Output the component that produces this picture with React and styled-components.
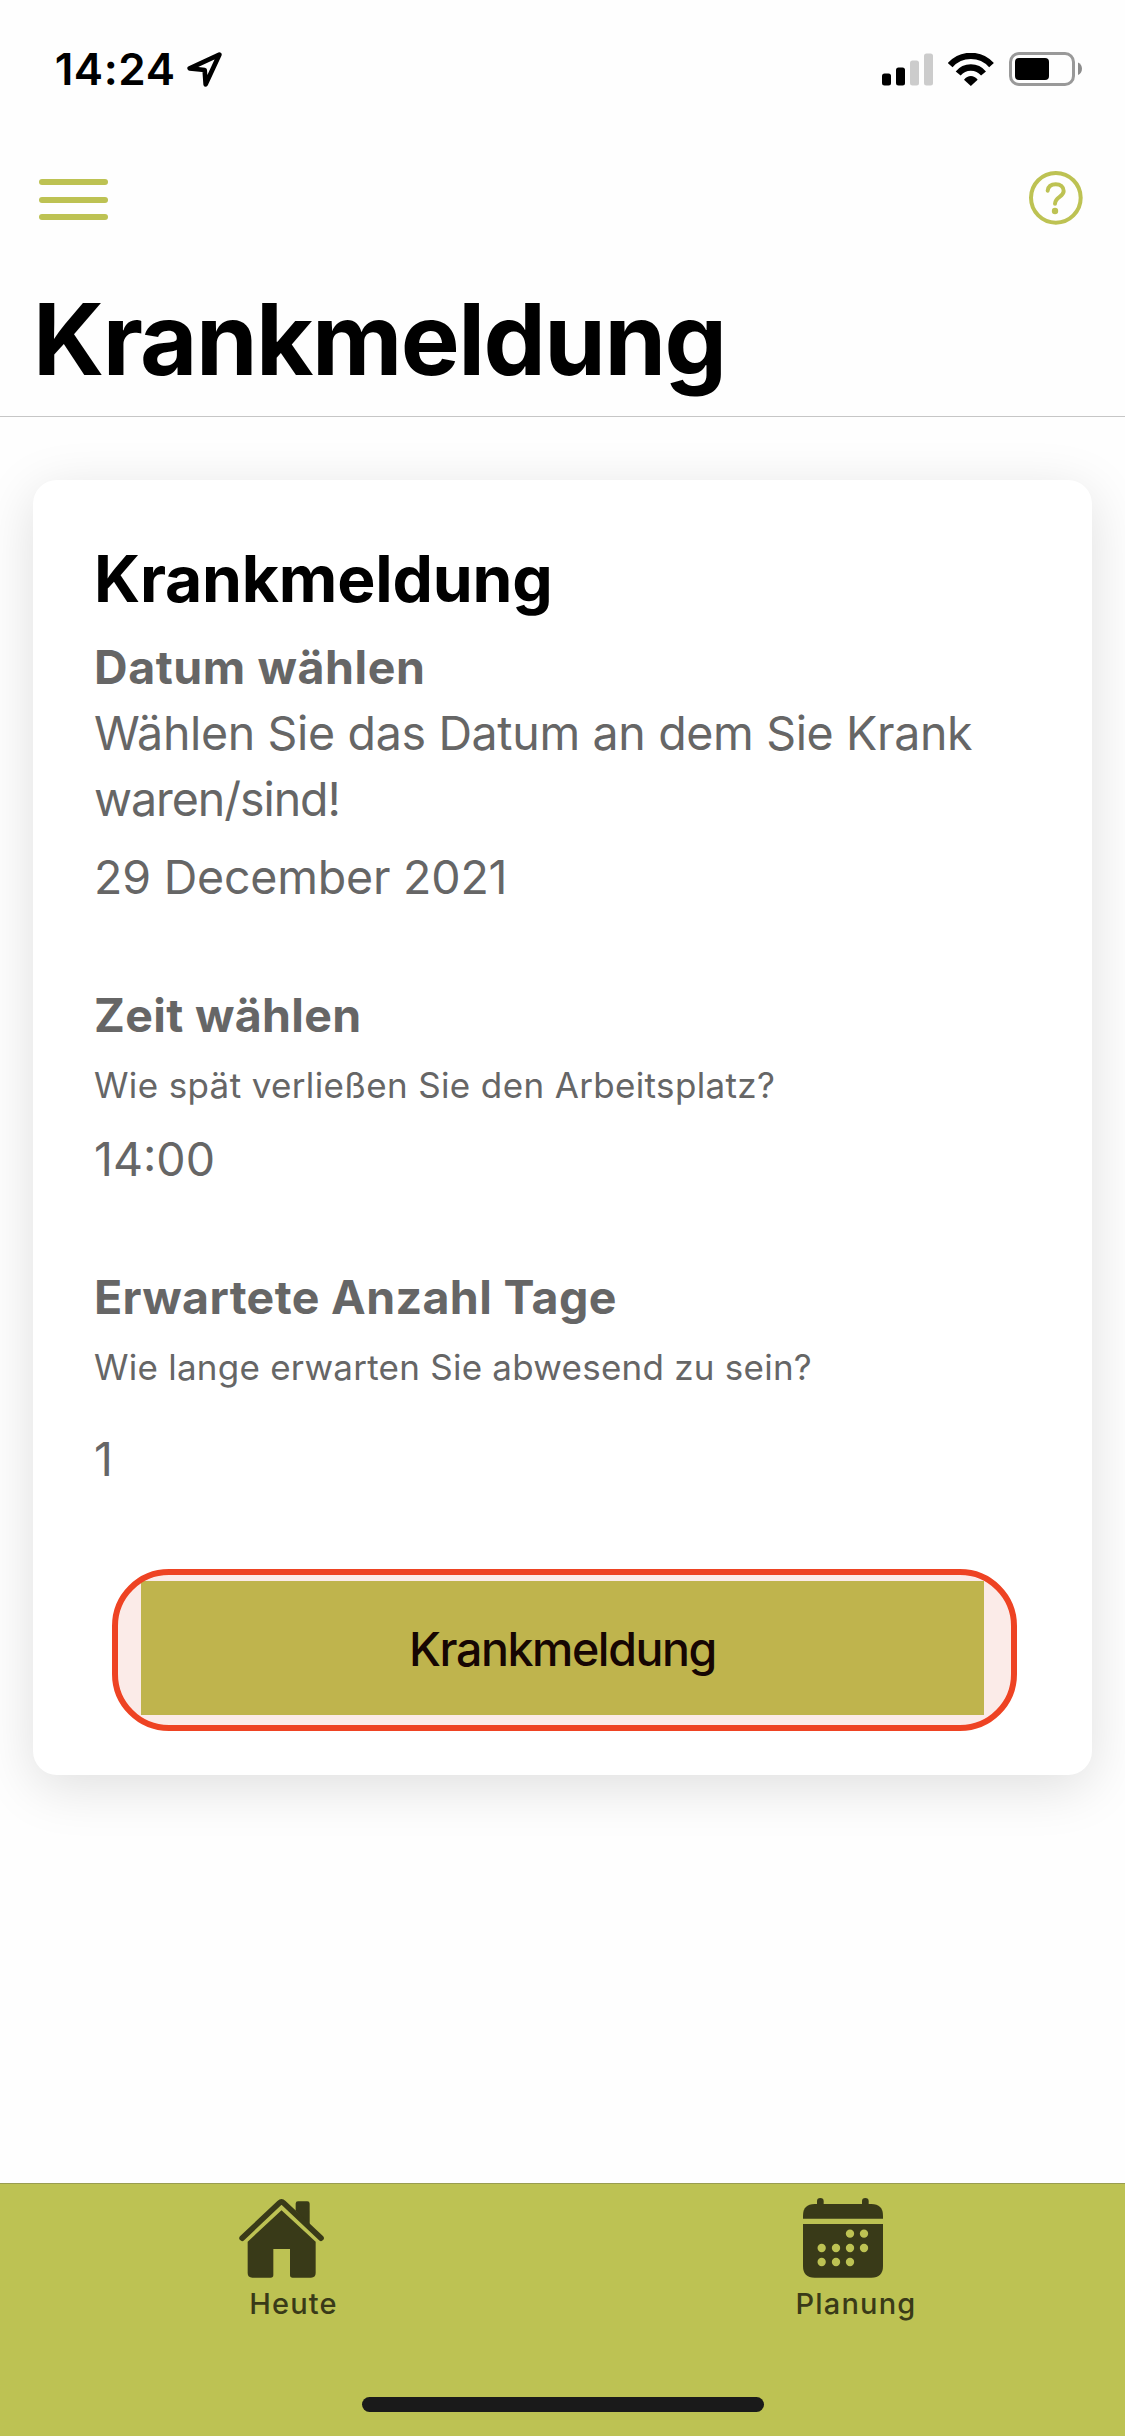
import React from "react";
import styled, { createGlobalStyle } from "styled-components";

const olive = "#bdc253";
const dark = "#393a18";
const grey = "#666666";

const GlobalStyle = createGlobalStyle`
  * { box-sizing: border-box; }
  body { margin: 0; background: #fefefe; }
`;

const Screen = styled.div`
  display: flex;
  flex-direction: column;
  width: 1125px;
  height: 2436px;
  overflow: hidden;
  background: #fefefe;
  font-family: Inter, "Liberation Sans", sans-serif;
  color: #000;
`;

const StatusBar = styled.div`
  display: flex;
  align-items: center;
  justify-content: space-between;
  height: 138px;
  padding: 0 43px 0 54.7px;
`;

const StatusGroup = styled.div`
  display: flex;
  align-items: center;
  gap: ${(p) => p.$gap}px;
`;

const Clock = styled.span`
  font-size: 44px;
  font-weight: 600;
  line-height: 52px;
  letter-spacing: 0.58px;
`;

const Icon = styled.svg`
  display: block;
  flex: none;
  width: ${(p) => p.$w}px;
  height: ${(p) => p.$h}px;
`;

const Toolbar = styled.nav`
  display: flex;
  align-items: center;
  justify-content: space-between;
  height: 120px;
  padding: 0 42.3px 0 38.7px;
`;

const IconButton = styled.button`
  padding: 0;
  border: 0;
  background: none;
`;

const MenuLines = styled.span`
  display: flex;
  flex-direction: column;
  gap: 11.6px;
  padding-top: 3px;
`;

const MenuLine = styled.span`
  width: 69.8px;
  height: 6px;
  border-radius: 3px;
  background: ${olive};
`;

const PageHeader = styled.header`
  padding: 21px 33px 17px;
  border-bottom: 1px solid #c6c6c6;
`;

const PageTitle = styled.h1`
  margin: 0;
  font-size: 99px;
  font-weight: 700;
  line-height: 120px;
  letter-spacing: -1.55px;
`;

const Main = styled.main`
  padding: 63px 33px 0;
`;

const Card = styled.section`
  display: flex;
  flex-direction: column;
  height: 1295px;
  padding: 60px 61px 44px;
  border-radius: 24px;
  background: #fff;
  box-shadow: 0 12px 54px rgba(0, 0, 0, 0.125);
`;

const CardTitle = styled.h2`
  margin: 0 0 16px;
  font-size: 64.2px;
  font-weight: 700;
  line-height: 78px;
  letter-spacing: -0.21px;
`;

const Field = styled.div`
  display: flex;
  flex-direction: column;
  margin-bottom: ${(p) => p.$after}px;
  color: ${grey};
`;

const Label = styled.h3`
  margin: 0;
  font-size: 46.5px;
  font-weight: 700;
  line-height: 66px;
  letter-spacing: ${(p) => p.$track}px;
`;

const Description = styled.p`
  margin: 0;
  font-size: 46.5px;
  line-height: 66px;
`;

const Line = styled.span`
  display: block;
  letter-spacing: ${(p) => p.$track}px;
`;

const Hint = styled.p`
  margin: 13px 0 0;
  font-size: 35px;
  line-height: 48px;
  letter-spacing: ${(p) => p.$track}px;
`;

const Value = styled.div`
  margin-top: ${(p) => p.$before}px;
  font-size: 46.5px;
  line-height: 66px;
  letter-spacing: ${(p) => p.$track || 0}px;
`;

const Highlight = styled.div`
  position: relative;
  width: 904.5px;
  height: 162px;
  margin: auto 0 0 18px;
  padding: 12px 32.5px 16px 29px;

  &::after {
    content: "";
    position: absolute;
    inset: 0;
    border: 6px solid #ee4323;
    border-radius: 57px;
    background: rgba(215, 55, 25, 0.1);
    background-clip: padding-box;
    pointer-events: none;
  }
`;

const SubmitButton = styled.button`
  display: flex;
  align-items: center;
  justify-content: center;
  width: 843px;
  height: 134px;
  padding: 2px 0 0;
  border: 0;
  background: ${olive};
  font-family: inherit;
  font-size: 46.5px;
  font-weight: 500;
  letter-spacing: -1.41px;
  color: #000;
`;

const TabBar = styled.footer`
  display: flex;
  flex-direction: column;
  align-items: center;
  justify-content: space-between;
  height: 253px;
  margin-top: auto;
  padding-bottom: 24px;
  border-top: 1px solid #999d50;
  background: ${olive};
`;

const Tabs = styled.div`
  display: grid;
  grid-template-columns: 1fr 1fr;
  width: 100%;
`;

const Tab = styled.a`
  display: flex;
  flex-direction: column;
  align-items: center;
  gap: 8px;
  padding-top: 14px;
  color: ${dark};
`;

const TabLabel = styled.span`
  padding-left: 24.5px;
  font-size: 29px;
  font-weight: 500;
  line-height: 36px;
  letter-spacing: 1.2px;
`;

const HomeIndicator = styled.div`
  width: 402px;
  height: 15px;
  border-radius: 8px;
  background: #1a1a1a;
`;

const LocationIcon = () => (
  <Icon $w={35} $h={35} viewBox="0 0 105 105">
    <path d="M97 8 8 49 53 54 56 97Z" fill="none" stroke="#000" strokeWidth="14" strokeLinejoin="round" />
  </Icon>
);

const SignalIcon = () => (
  <Icon $w={51} $h={33} viewBox="0 0 51 33">
    <rect x="0" y="20.5" width="9" height="12" rx="2.5" />
    <rect x="14" y="14.5" width="9" height="18" rx="2.5" />
    <rect x="28" y="7.5" width="9" height="25" rx="2.5" fill="#ccc" />
    <rect x="42" y="0.5" width="9" height="32" rx="2.5" fill="#ccc" />
  </Icon>
);

const WifiIcon = () => (
  <Icon $w={45.7} $h={33} viewBox="0 0 137 99">
    <g fill="none" stroke="#000" strokeWidth="19">
      <path d="M6.5 36.5A83 83 0 0 1 130.5 36.5" />
      <path d="M30.5 61.5A49 49 0 0 1 106.5 61.5" />
    </g>
    <path d="M48 80Q57 69 68.500 69Q80 69 89 80L68.500 99Z" />
  </Icon>
);

const BatteryIcon = () => (
  <Icon $w={73} $h={34} viewBox="0 0 73 34">
    <rect x="1.500" y="1.500" width="63" height="31" rx="8.500" fill="none" stroke="#999" strokeWidth="3" />
    <rect x="6" y="6" width="34" height="22" rx="4" />
    <path d="M69 10.500C74.300 12.500 74.300 21 69 23Z" fill="#8c8c8c" />
  </Icon>
);

const HelpIcon = () => (
  <Icon $w={53.7} $h={53.7} viewBox="0 0 161 161">
    <circle cx="80.500" cy="80.500" r="74.500" fill="none" stroke={olive} strokeWidth="12" />
    <path
      d="M56 59C57 47 66 39.500 80 39.500C94 39.500 104 48 104 60C104 78 78 77 78 98"
      fill="none"
      stroke={olive}
      strokeWidth="12"
      strokeLinecap="round"
    />
    <circle cx="78" cy="120" r="9.500" fill={olive} />
  </Icon>
);

const HouseIcon = () => (
  <Icon $w={85} $h={80} viewBox="0 0 255 240">
    <g fill="currentColor">
      <path d="M170 38V17Q170 10 177 10H205Q212 10 212 17V84Z" />
      <path d="M127.500 37 230 131V225Q230 239 216 239H161Q153 239 153 231V153H103V231Q103 239 95 239H40Q26 239 26 225V131Z" />
    </g>
    <path d="M9.500 120.500 121 15Q127.500 9 134 15L246 120.500" fill="none" stroke="currentColor" strokeWidth="17" strokeLinecap="round" />
  </Icon>
);

const calendarDots = [
  [141, 107], [183, 107],
  [56, 150], [99, 150], [141, 150], [183, 150],
  [56, 192], [99, 192], [141, 192],
];

const CalendarIcon = () => (
  <Icon $w={81} $h={80} viewBox="0 0 243 240">
    <g fill="currentColor">
      <rect x="42" y="0" width="20" height="34" rx="10" />
      <rect x="177" y="0" width="20" height="34" rx="10" />
      <path d="M0 62V53Q0 18 35 18H205Q240 18 240 53V62Z" />
      <path d="M0 78H240V204Q240 239 205 239H35Q0 239 0 204Z" />
    </g>
    {calendarDots.map(([x, y]) => (
      <circle key={`${x}-${y}`} cx={x} cy={y} r="12.500" fill={olive} />
    ))}
  </Icon>
);

export default function App() {
  return (
    <Screen>
      <GlobalStyle />
      <StatusBar>
        <StatusGroup $gap={11.5}>
          <Clock>14:24</Clock>
          <LocationIcon />
        </StatusGroup>
        <StatusGroup $gap={15}>
          <SignalIcon />
          <WifiIcon />
          <BatteryIcon />
        </StatusGroup>
      </StatusBar>
      <Toolbar>
        <IconButton aria-label="Menü">
          <MenuLines>
            <MenuLine />
            <MenuLine />
            <MenuLine />
          </MenuLines>
        </IconButton>
        <IconButton aria-label="Hilfe">
          <HelpIcon />
        </IconButton>
      </Toolbar>
      <PageHeader>
        <PageTitle>Krankmeldung</PageTitle>
      </PageHeader>
      <Main>
        <Card>
          <CardTitle>Krankmeldung</CardTitle>
          <Field $after={72}>
            <Label $track={0.57}>Datum wählen</Label>
            <Description>
              <Line $track={-0.34}>Wählen Sie das Datum an dem Sie Krank</Line>
              <Line $track={-1.05}>waren/sind!</Line>
            </Description>
            <Value $before={12} $track={-0.2}>29 December 2021</Value>
          </Field>
          <Field $after={72}>
            <Label $track={0.34}>Zeit wählen</Label>
            <Hint $track={0.36}>Wie spät verließen Sie den Arbeitsplatz?</Hint>
            <Value $before={17}>14:00</Value>
          </Field>
          <Field $after={0}>
            <Label $track={0.37}>Erwartete Anzahl Tage</Label>
            <Hint $track={0.24}>Wie lange erwarten Sie abwesend zu sein?</Hint>
            <Value $before={34.5}>1</Value>
          </Field>
          <Highlight>
            <SubmitButton>Krankmeldung</SubmitButton>
          </Highlight>
        </Card>
      </Main>
      <TabBar>
        <Tabs>
          <Tab>
            <HouseIcon />
            <TabLabel>Heute</TabLabel>
          </Tab>
          <Tab>
            <CalendarIcon />
            <TabLabel>Planung</TabLabel>
          </Tab>
        </Tabs>
        <HomeIndicator />
      </TabBar>
    </Screen>
  );
}
